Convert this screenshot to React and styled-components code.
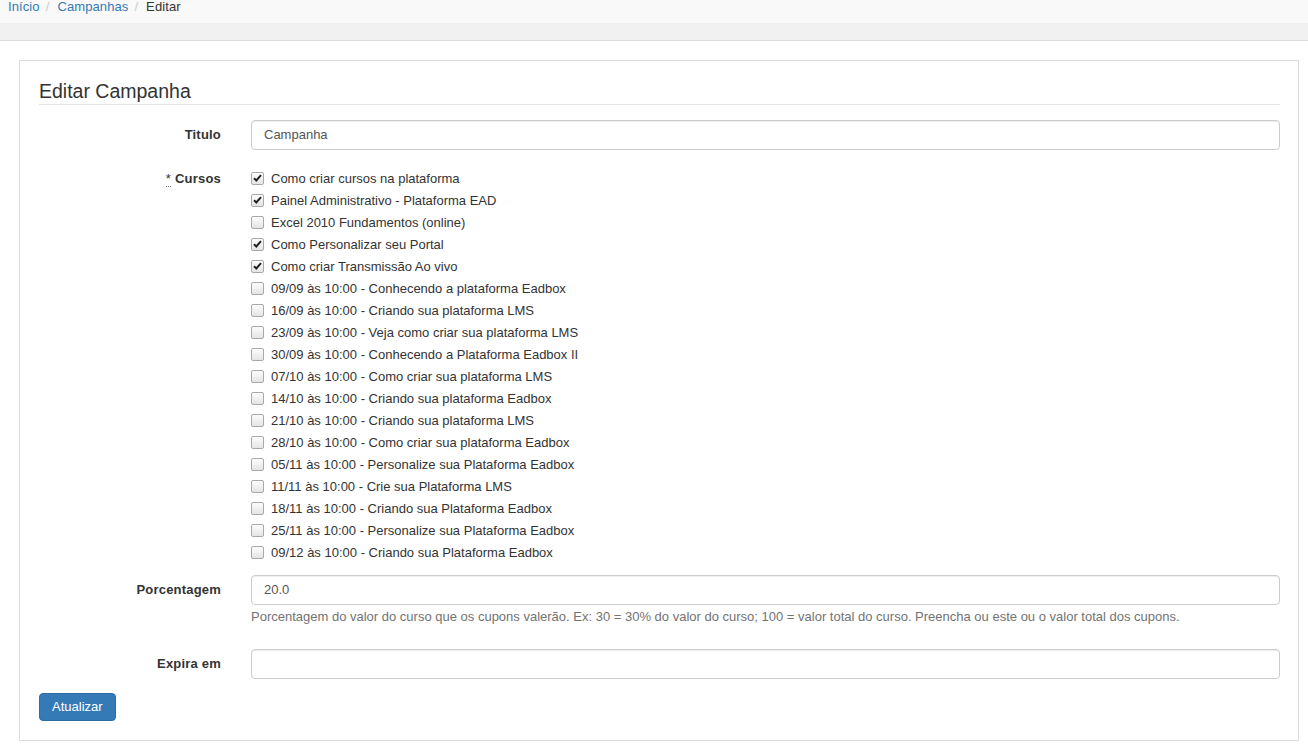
import styled, { createGlobalStyle } from 'styled-components'

const GlobalStyle = createGlobalStyle`
    html, body {
        margin: 0;
        padding: 0;
        background: #fff;
        font-family: "Liberation Sans", Arial, Helvetica, sans-serif;
        font-size: 13px;
        color: #333;
    }
    * { box-sizing: border-box; }
`

const cursos = [
    { name: "Como criar cursos na plataforma", checked: true },
    { name: "Painel Administrativo - Plataforma EAD", checked: true },
    { name: "Excel 2010 Fundamentos (online)", checked: false },
    { name: "Como Personalizar seu Portal", checked: true },
    { name: "Como criar Transmissão Ao vivo", checked: true },
    { name: "09/09 às 10:00 - Conhecendo a plataforma Eadbox" },
    { name: "16/09 às 10:00 - Criando sua plataforma LMS" },
    { name: "23/09 às 10:00 - Veja como criar sua plataforma LMS" },
    { name: "30/09 às 10:00 - Conhecendo a Plataforma Eadbox II" },
    { name: "07/10 às 10:00 - Como criar sua plataforma LMS" },
    { name: "14/10 às 10:00 - Criando sua plataforma Eadbox" },
    { name: "21/10 às 10:00 - Criando sua plataforma LMS" },
    { name: "28/10 às 10:00 - Como criar sua plataforma Eadbox" },
    { name: "05/11 às 10:00 - Personalize sua Plataforma Eadbox" },
    { name: "11/11 às 10:00 - Crie sua Plataforma LMS" },
    { name: "18/11 às 10:00 - Criando sua Plataforma Eadbox" },
    { name: "25/11 às 10:00 - Personalize sua Plataforma Eadbox" },
    { name: "09/12 às 10:00 - Criando sua Plataforma Eadbox" },
]

const Breadcrumb = styled.ol`
    list-style: none;
    margin: 0;
    padding: 0 8px;
    height: 23px;
    line-height: 14px;
    background: #f9f9f9;
    display: flex;
    align-items: flex-start;
    letter-spacing: 0.1px;
    li + li::before {
        content: "/";
        color: #ccc;
        padding: 0 8px 0 6px;
    }
`

const Crumb = styled.li`
    color: ${(props) => props.$active ? "#333" : "#337ab7"};
`

const Strip = styled.div`
    height: 18px;
    background: #f1f1f1;
    border-bottom: 1px solid #dcdcdc;
`

const Page = styled.div`
    padding: 19px 9px 13px 19px;
`

const Panel = styled.section`
    border: 1px solid #ddd;
    padding: 19px 18px 19px 19px;
`

const Legend = styled.h2`
    margin: 0 0 15px 0;
    padding-bottom: 2px;
    font-size: 19.5px;
    font-weight: normal;
    line-height: 22px;
    color: #333;
    border-bottom: 1px solid #e5e5e5;
`

const FormGroup = styled.div`
    display: flex;
    align-items: flex-start;
    margin-bottom: ${(props) => props.$gap || 15}px;
`

const Label = styled.label`
    width: 182px;
    flex: none;
    text-align: right;
    font-weight: bold;
    line-height: 18px;
    padding-top: ${(props) => props.$top ?? 6}px;
    margin-right: 30px;
    color: #333;
    letter-spacing: 0.2px;
`

const Required = styled.abbr`
    text-decoration: none;
    border-bottom: 1px dotted #777;
    margin-right: 4px;
    font-weight: normal;
    cursor: help;
`

const Field = styled.div`
    flex: 1;
    min-width: 0;
`

const Input = styled.div`
    height: 30px;
    border: 1px solid #ccc;
    border-radius: 4px;
    padding: 0 12px;
    line-height: 28px;
    color: #555;
    box-shadow: inset 0 1px 1px rgba(0, 0, 0, 0.075);
`

const Help = styled.p`
    margin: 3px 0 8px;
    line-height: 18px;
    color: #737373;
`

const CheckList = styled.div`
    padding-top: 2px;
`

const CheckRow = styled.label`
    display: flex;
    align-items: center;
    height: 22px;
    gap: 7px;
    color: #333;
`

const Box = styled.span`
    width: 13px;
    height: 13px;
    flex: none;
    border: 1px solid #a9a9a9;
    border-radius: 2px;
    background: linear-gradient(#fdfdfd, #e4e4e4);
    display: flex;
    align-items: center;
    justify-content: center;
`

const Button = styled.button`
    font-family: inherit;
    font-size: 13px;
    color: #fff;
    background: #337ab7;
    border: 1px solid #2e6da4;
    border-radius: 4px;
    height: 28px;
    padding: 0 12px;
    line-height: 26px;
`

function Checkbox({ checked }) {
    return (
        <Box>
            {checked && (
                <svg width="9" height="8" viewBox="0 0 9 8">
                    <path d="M1 4.2 L3.3 6.5 L8 1.2" fill="none" stroke="#222" strokeWidth="2" />
                </svg>
            )}
        </Box>
    )
}

export default function App() {
    return (
        <>
            <GlobalStyle />
            <Breadcrumb>
                <Crumb>Início</Crumb>
                <Crumb>Campanhas</Crumb>
                <Crumb $active>Editar</Crumb>
            </Breadcrumb>
            <Strip />
            <Page>
                <Panel>
                    <Legend>Editar Campanha</Legend>
                    <FormGroup>
                        <Label>Titulo</Label>
                        <Field><Input>Campanha</Input></Field>
                    </FormGroup>
                    <FormGroup $gap={12}>
                        <Label $top={5}><Required title="obrigatório">*</Required>Cursos</Label>
                        <Field>
                            <CheckList>
                                {cursos.map((curso) => (
                                    <CheckRow key={curso.name}>
                                        <Checkbox checked={curso.checked} />
                                        {curso.name}
                                    </CheckRow>
                                ))}
                            </CheckList>
                        </Field>
                    </FormGroup>
                    <FormGroup $gap={15}>
                        <Label>Porcentagem</Label>
                        <Field>
                            <Input>20.0</Input>
                            <Help>Porcentagem do valor do curso que os cupons valerão. Ex: 30 = 30% do valor do curso; 100 = valor total do curso. Preencha ou este ou o valor total dos cupons.</Help>
                        </Field>
                    </FormGroup>
                    <FormGroup $gap={14}>
                        <Label>Expira em</Label>
                        <Field><Input /></Field>
                    </FormGroup>
                    <Button>Atualizar</Button>
                </Panel>
            </Page>
        </>
    )
}
